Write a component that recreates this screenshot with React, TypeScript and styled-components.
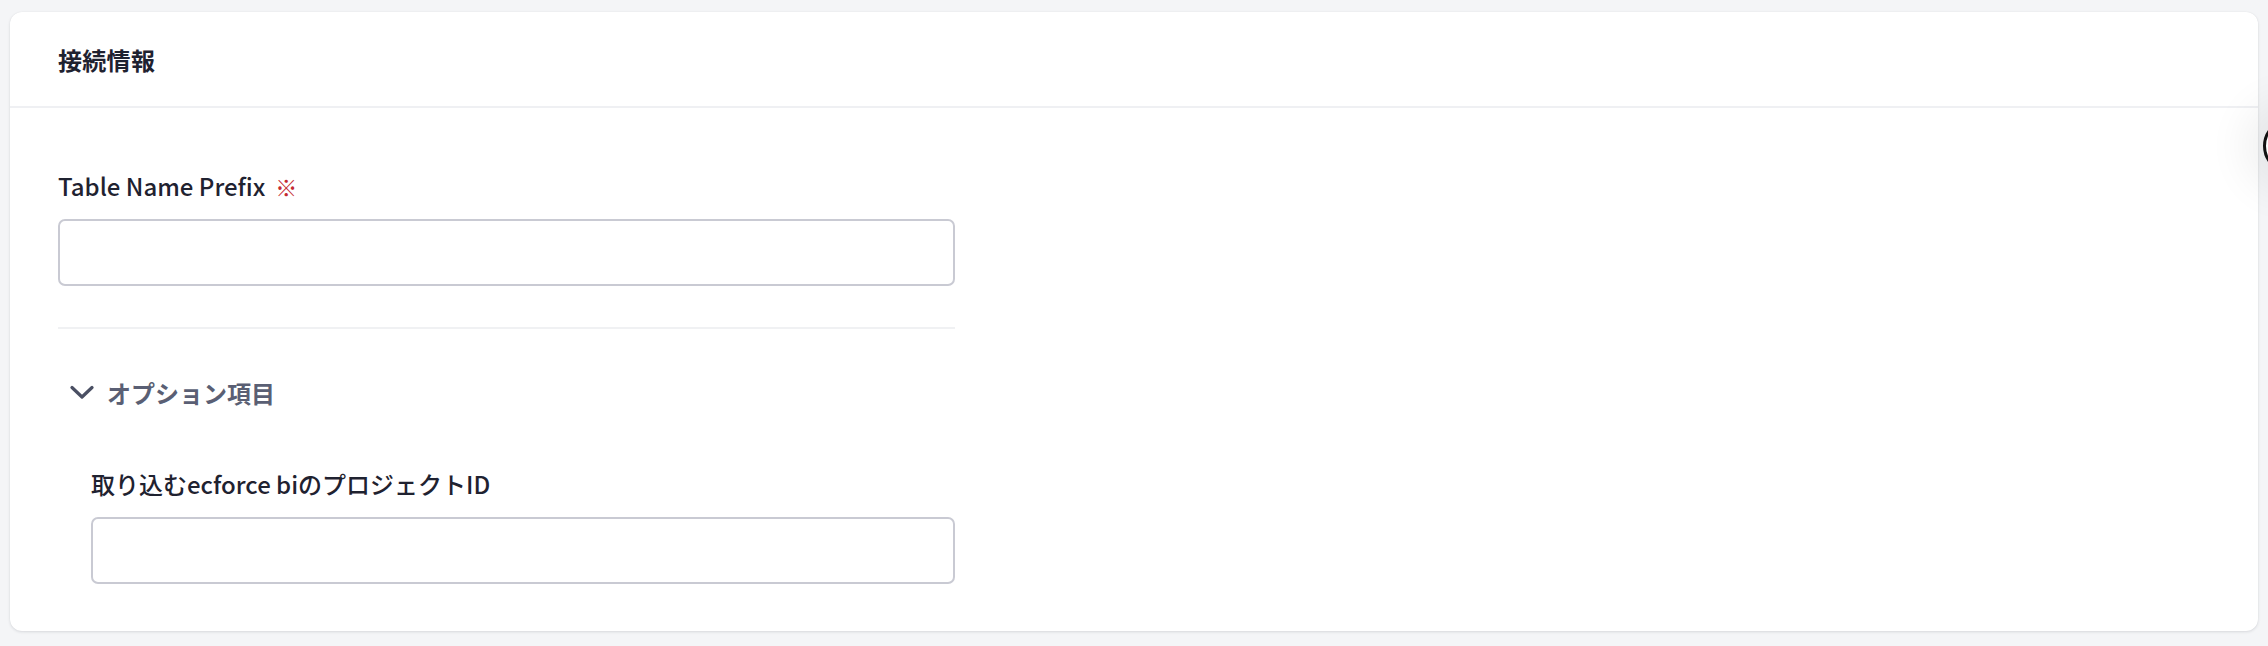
import React from "react";
import styled, { createGlobalStyle } from "styled-components";

const GlobalStyle = createGlobalStyle`
  html, body {
    margin: 0;
    padding: 0;
    background: #f4f5f7;
    font-family: "Noto Sans CJK JP", "Noto Sans", sans-serif;
    color: #1f2230;
    overflow: hidden;
  }
  * { box-sizing: border-box; }
`;

const Page = styled.div`
  padding: 12px 10px 14px 10px;
  position: relative;
  min-height: 646px;
`;

const Card = styled.section`
  background: #ffffff;
  border-radius: 12px;
  box-shadow: 0 1px 3px rgba(20, 24, 40, 0.12), 0 0 1px rgba(20, 24, 40, 0.08);
  overflow: hidden;
`;

const CardHeader = styled.header`
  height: 96px;
  display: flex;
  align-items: center;
  padding: 0 48px;
  border-bottom: 2px solid #eff0f3;
`;

const Title = styled.h2`
  margin: 0;
  font-size: 24px;
  font-weight: 700;
  color: #1f2230;
  letter-spacing: 0.3px;
`;

const CardBody = styled.div`
  padding: 62px 48px 47px 48px;
  display: flex;
  flex-direction: column;
  width: 993px;
`;

const Field = styled.div<{ $indent?: number }>`
  display: flex;
  flex-direction: column;
  gap: 17px;
  padding-left: ${(p) => p.$indent ?? 0}px;
`;

const Label = styled.label`
  display: flex;
  align-items: center;
  gap: 10px;
  font-size: 24px;
  line-height: 32px;
  font-weight: 500;
  color: #1f2230;
`;

const Required = styled.span`
  color: #c42a30;
  font-size: 22px;
`;

const Input = styled.input`
  height: 67px;
  width: 100%;
  border: 2px solid #c9cad3;
  border-radius: 7px;
  background: #fff;
  font: inherit;
  padding: 0 16px;
  outline: none;
`;

const Divider = styled.hr`
  border: none;
  border-top: 2px solid #f0f1f3;
  margin: 41px 0 0 0;
`;

const Toggle = styled.button`
  display: flex;
  align-items: center;
  gap: 13px;
  background: none;
  border: none;
  padding: 0 0 0 12px;
  margin: 35px 0 0 0;
  height: 56px;
  font-family: inherit;
  font-size: 24px;
  font-weight: 700;
  color: #5a5f74;
  cursor: pointer;
  align-self: flex-start;
`;

const OptionArea = styled.div`
  margin-top: 48px;
`;

const FloatingButton = styled.div`
  position: absolute;
  left: 2263px;
  top: 118px;
  width: 56px;
  height: 56px;
  border-radius: 50%;
  background: #fff;
  border: 3px solid #111;
  box-shadow: 0 0 40px 20px rgba(0, 0, 0, 0.06);
`;

const Chevron = () => (
  <svg width="24" height="15" viewBox="0 0 24 15" fill="none">
    <path d="M2 2.5 L12 12 L22 2.5" stroke="#4a4f63" strokeWidth="3.2" strokeLinecap="round" strokeLinejoin="round" />
  </svg>
);

export default function App() {
  return (
    <>
      <GlobalStyle />
      <Page>
        <Card>
          <CardHeader>
            <Title>接続情報</Title>
          </CardHeader>
          <CardBody>
            <Field>
              <Label>
                Table Name Prefix <Required>※</Required>
              </Label>
              <Input type="text" />
            </Field>
            <Divider />
            <Toggle type="button">
              <Chevron />
              オプション項目
            </Toggle>
            <OptionArea>
              <Field $indent={33}>
                <Label>取り込むecforce biのプロジェクトID</Label>
                <Input type="text" />
              </Field>
            </OptionArea>
          </CardBody>
        </Card>
        <FloatingButton />
      </Page>
    </>
  );
}
